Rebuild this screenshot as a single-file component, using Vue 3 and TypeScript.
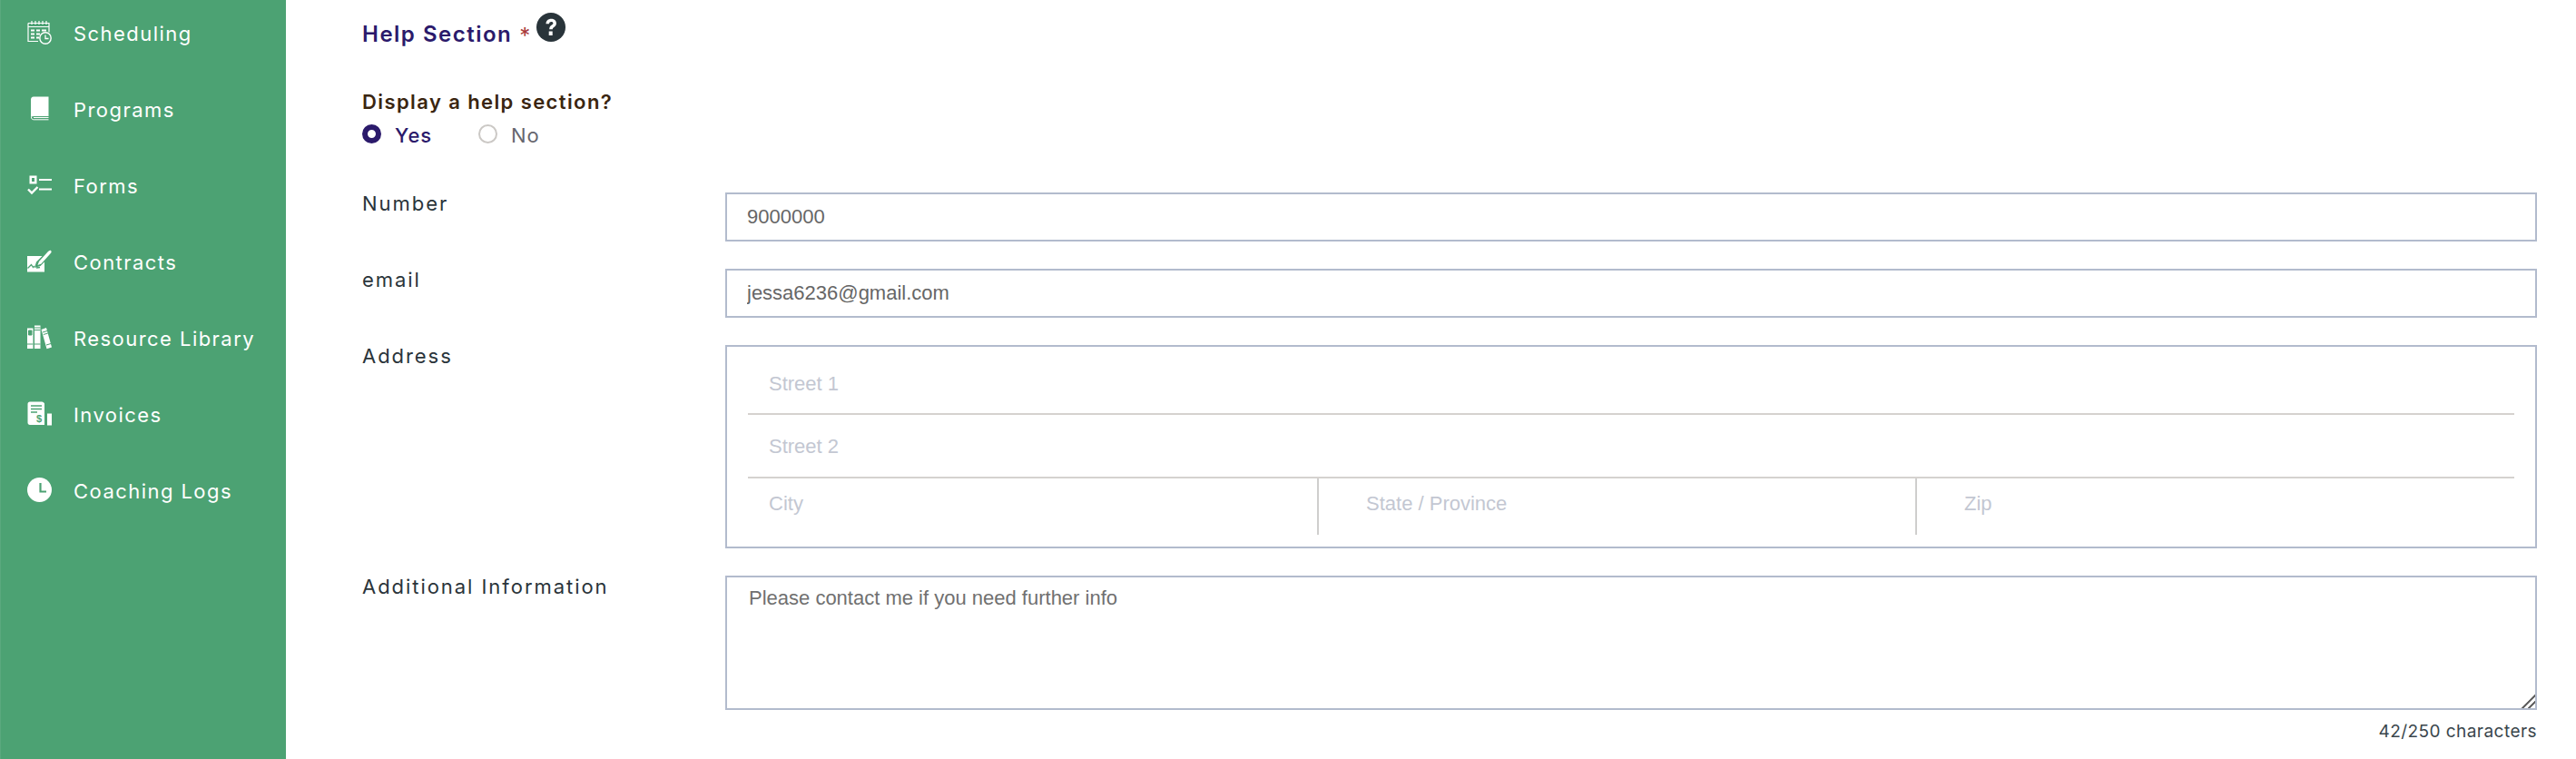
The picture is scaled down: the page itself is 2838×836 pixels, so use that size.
<script setup lang="ts">
const navItems: { key: string; label: string }[] = [
  { key: 'cal', label: 'Scheduling' },
  { key: 'book', label: 'Programs' },
  { key: 'forms', label: 'Forms' },
  { key: 'contract', label: 'Contracts' },
  { key: 'lib', label: 'Resource Library' },
  { key: 'inv', label: 'Invoices' },
  { key: 'clock', label: 'Coaching Logs' },
]
</script>

<template>
  <div class="page">
    <aside class="sidebar">
      <ul class="nav">
        <li v-for="item in navItems" :key="item.key" class="nav-item">
          <svg class="nav-icon" viewBox="0 0 27 27" aria-hidden="true">
            <g v-if="item.key === 'cal'">
              <path d="M1 3.500h23v10M1 3.500v20h11M1 7.500h23" fill="none" stroke="#fff" stroke-width="1.200" />
              <path d="M5 1v4M9 1v4M13 1v4M17 1v4M21 1v4" stroke="#fff" stroke-width="1.200" />
              <path d="M4 10.500h4v2H4zM10 10.500h4v2h-4zM16 10.500h5v2h-5zM4 14.500h4v2H4zM10 14.500h4v2h-4zM4 18.500h4v2H4zM10 18.500h3v2h-3z" fill="#fff" />
              <circle cx="20" cy="20" r="6.200" fill="#4ca273" stroke="#fff" stroke-width="1.400" />
              <path d="M20 16.500V20.500h3.500" fill="none" stroke="#fff" stroke-width="1.300" />
            </g>
            <g v-else-if="item.key === 'book'">
              <path d="M7 0.500h16.500v21.500H7c-2 0-3 1-3 1.800V4C4 1.800 5 .5 7 .5z" fill="#fff" />
              <path d="M4.500 23c0 1.800 1 2.800 2.800 2.800h16.200M7 23.500h16.500" fill="none" stroke="#fff" stroke-width="1" />
            </g>
            <g v-else-if="item.key === 'forms'">
              <path d="M2.500 3.500h8v9h-8z M5 6v4h3V6z" fill="#fff" fill-rule="evenodd" />
              <path d="M13 8h14M13 18.500h14" stroke="#fff" stroke-width="2.200" />
              <path d="M1 18.500l4 4 6.500-6.500" fill="none" stroke="#fff" stroke-width="2.400" />
            </g>
            <g v-else-if="item.key === 'contract'">
              <path d="M0 8h16.500L10 14.500l-2 6.500 6.500-2L19 14.500V25.500H0z" fill="#fff" />
              <path d="M.5 21.500l4-4 2 3 1.500-1.500M10 21l4-.5" fill="none" stroke="#4ca273" stroke-width="1.300" />
              <path d="M11.500 18l1.500-4L23 3c1-1 2-1.800 3-1s.8 2-.2 3L15.500 16.500z" fill="#fff" />
            </g>
            <g v-else-if="item.key === 'lib'">
              <path d="M0 3.500h6.500V26H0zM8 .5h6.500V26H8z" fill="#fff" />
              <path d="M15.500 5l5.500-2 6 21.500-5.500 1.800z" fill="#fff" />
              <path d="M1.500 6h3.500v5H1.500zM0 21h6.500M8 3h6.500M8 5.500h6.500M8 21h6.500M17 8l5-1.500M17.800 10.500l5-1.500M21 22l5-1.500" stroke="#4ca273" stroke-width="1" fill="#4ca273" />
            </g>
            <g v-else-if="item.key === 'inv'">
              <path d="M3 .5h13c1.500 0 2.500 1 3 2V26H3c-1.500 0-2.500-1-2.500-2.500V3C.5 1.500 1.500.5 3 .5zM22 13.500h5V26.500h-5z" fill="#fff" />
              <path d="M4 5h12M4 8.500h12M4 12h7" stroke="#4ca273" stroke-width="1.300" />
              <text x="10" y="23" font-size="11" font-weight="700" fill="#4ca273" font-family="Liberation Sans, sans-serif">$</text>
            </g>
            <g v-else>
              <circle cx="13.500" cy="13.500" r="13.500" fill="#fff" />
              <path d="M14.500 6v9.500h6.500" fill="none" stroke="#4ca273" stroke-width="2.200" />
            </g>
          </svg>
          <span class="nav-label">{{ item.label }}</span>
        </li>
      </ul>
    </aside>

    <main class="main">
      <div class="section-head">
        <h2 class="section-title">Help Section</h2>
        <span class="required">*</span>
        <svg class="help-icon" viewBox="0 0 32 32" aria-hidden="true">
          <circle cx="16" cy="16" r="16" fill="#29343a" />
          <path d="M10.500 12.300c0-3.400 2.400-5.500 5.700-5.500 3.200 0 5.700 1.900 5.700 4.900 0 2.200-1.300 3.300-2.600 4.200-1 .7-1.500 1.200-1.500 2.300h-3.600c0-2.300.9-3.400 2.300-4.400 1-.7 1.900-1.200 1.900-2.200 0-.9-.8-1.600-2.100-1.600-1.400 0-2.200.9-2.300 2.300z" fill="#fff" />
          <rect x="13.700" y="20.500" width="4" height="4.500" fill="#fff" />
        </svg>
      </div>

      <p class="question">Display a help section?</p>
      <div class="radios">
        <label class="radio radio-on"><input type="radio" name="help" checked />Yes</label>
        <label class="radio radio-off"><input type="radio" name="help" />No</label>
      </div>

      <div class="form">
        <label class="field-label">Number</label>
        <input class="text-input" type="text" value="9000000" />

        <label class="field-label">email</label>
        <input class="text-input" type="text" value="jessa6236@gmail.com" />

        <label class="field-label">Address</label>
        <div class="address">
          <input class="addr-input street-one" type="text" placeholder="Street 1" />
          <input class="addr-input street-two" type="text" placeholder="Street 2" />
          <div class="addr-row">
            <input class="addr-input addr-city" type="text" placeholder="City" />
            <input class="addr-input addr-state" type="text" placeholder="State / Province" />
            <input class="addr-input addr-zip" type="text" placeholder="Zip" />
          </div>
        </div>

        <label class="field-label">Additional Information</label>
        <div class="area-wrap">
          <textarea class="text-area">Please contact me if you need further info</textarea>
          <div class="counter">42/250 characters</div>
        </div>
      </div>
    </main>
  </div>
</template>

<style scoped>
.page {
  display: flex;
  width: 2838px;
  height: 836px;
  overflow: hidden;
  background: #fff;
  font-family: Inter, "Open Sans", sans-serif;
}
.sidebar {
  width: 315px;
  flex: none;
  box-sizing: border-box;
  border-left: 1px solid #5aa97e;
  background: #4ca273;
  overflow: hidden;
}
.nav {
  list-style: none;
  margin: -6px 0 0;
  padding: 0;
}
.nav-item {
  display: flex;
  align-items: center;
  height: 84px;
  padding-left: 29px;
  color: #fff;
}
.nav-icon {
  width: 27px;
  height: 27px;
  flex: none;
  margin-top: -2px;
}
.nav-label {
  margin-left: 24px;
  padding-top: 2px;
  font-size: 22px;
  letter-spacing: 1.450px;
  line-height: 28px;
}
.main {
  flex: 1;
  min-width: 0;
  padding: 14px 43px 0 84px;
}
.section-head {
  display: flex;
  align-items: flex-start;
  height: 84px;
}
.section-title {
  margin: 8px 0 0;
  font-size: 24px;
  font-weight: 600;
  line-height: 32px;
  letter-spacing: 1.500px;
  color: #2b1a6b;
}
.required {
  margin: 12px 0 0 8px;
  font-size: 24px;
  line-height: 28px;
  color: #a93a3a;
}
.help-icon {
  width: 32px;
  height: 32px;
  margin-left: 7px;
}
.question {
  margin: 0;
  font-size: 22px;
  font-weight: 600;
  line-height: 28px;
  letter-spacing: 1.400px;
  color: #3a2510;
}
.radios {
  display: flex;
  margin-top: 9px;
  height: 28px;
}
.radio {
  display: flex;
  align-items: center;
  font-size: 22px;
  line-height: 28px;
  letter-spacing: 1px;
}
.radio input {
  appearance: none;
  width: 21px;
  height: 21px;
  margin: -4px 15px 0 0;
  border-radius: 50%;
  box-sizing: border-box;
}
.radio-on {
  width: 128px;
  color: #2b1a6b;
  font-weight: 500;
}
.radio-on input {
  background: #fff;
  border: 6.500px solid #2b1a6b;
}
.radio-off {
  color: #66666e;
}
.radio-off input {
  border: 2px solid #cbc8c5;
}
.form {
  display: grid;
  grid-template-columns: 400px 1fr;
  row-gap: 30px;
  margin-top: 49px;
}
.field-label {
  margin-top: -2px;
  font-size: 22px;
  line-height: 28px;
  letter-spacing: 1.950px;
  color: #2a343a;
}
.text-input {
  height: 54px;
  box-sizing: border-box;
  width: 100%;
  border: 2px solid #b2bbcd;
  padding: 0 22px;
  font: 22px "Liberation Sans", Arial, sans-serif;
  color: #666;
  outline: none;
  background: #fff;
}
.address {
  height: 224px;
  box-sizing: border-box;
  border: 2px solid #b2bbcd;
  padding: 0 23px;
}
.addr-input {
  display: block;
  width: 100%;
  box-sizing: border-box;
  border: 0;
  outline: none;
  background: transparent;
  font: 22px "Liberation Sans", Arial, sans-serif;
  padding: 0 23px;
  color: #555;
}
.addr-input::placeholder {
  color: #c3c7d2;
  opacity: 1;
}
.street-one {
  height: 75px;
  padding-top: 8px;
  border-bottom: 2px solid #d5d2cf;
}
.street-two {
  height: 70px;
  padding-top: 2px;
  border-bottom: 2px solid #d5d2cf;
}
.addr-row {
  display: grid;
  grid-template-columns: 627fr 659fr 660fr;
  height: 62px;
}
.addr-row .addr-input {
  height: 62px;
  padding-bottom: 6px;
}
.addr-row .addr-state,
.addr-row .addr-zip {
  border-left: 2px solid #cfcecd;
  padding-left: 52px;
}
.area-wrap {
  display: flex;
  flex-direction: column;
  align-items: stretch;
}
.text-area {
  display: block;
  height: 148px;
  width: 100%;
  box-sizing: border-box;
  border: 2px solid #b2bbcd;
  padding: 9px 24px;
  font: 22px/28px "Liberation Sans", Arial, sans-serif;
  color: #707070;
  outline: none;
  resize: vertical;
}
.text-area::-webkit-resizer {
  background: linear-gradient(135deg, transparent 0 47%, #666 47% 58%, transparent 58% 72%, #666 72% 83%, transparent 83%);
}
.counter {
  margin-top: 11px;
  text-align: right;
  font-size: 19px;
  line-height: 26px;
  letter-spacing: 0.450px;
  color: #3a464c;
}
</style>
